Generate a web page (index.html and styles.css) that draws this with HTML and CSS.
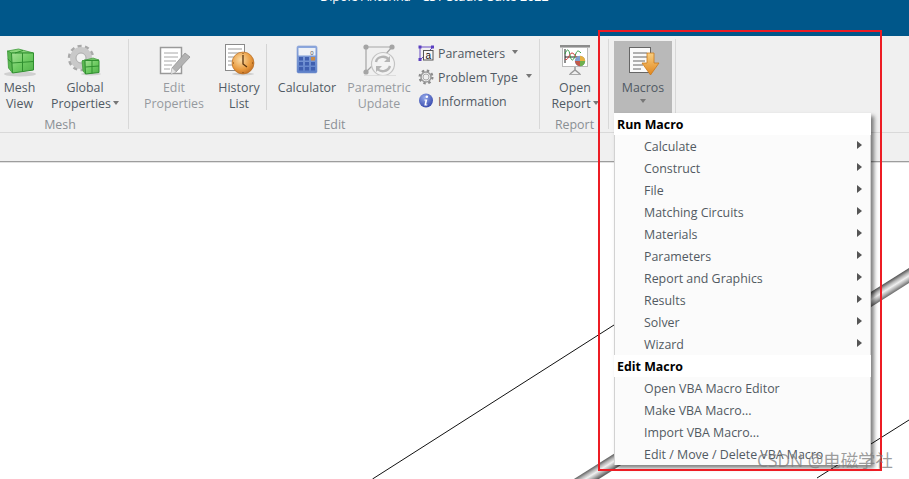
FILE: index.html
```html
<!DOCTYPE html>
<html lang="en">
<head>
<meta charset="utf-8">
<title>Dipole Antenna - CST Studio Suite 2022</title>
<link rel="stylesheet" href="styles.css">
</head>
<body>
<svg width="0" height="0" class="defs">
  <defs>
    <linearGradient id="green" x1="0" y1="0" x2="1" y2="1"><stop offset="0" stop-color="#a5e095"/><stop offset=".5" stop-color="#6ecb62"/><stop offset="1" stop-color="#4fb048"/></linearGradient>
    <radialGradient id="clock" cx=".4" cy=".35" r=".75"><stop offset="0" stop-color="#fbdca6"/><stop offset=".6" stop-color="#e99b3f"/><stop offset="1" stop-color="#b8641c"/></radialGradient>
    <linearGradient id="arrow" x1="0" y1="0" x2="0" y2="1"><stop offset="0" stop-color="#f8cf82"/><stop offset="1" stop-color="#e2861c"/></linearGradient>
    <linearGradient id="calc" x1="0" y1="0" x2="0" y2="1"><stop offset="0" stop-color="#8ea9de"/><stop offset="1" stop-color="#5c7fc8"/></linearGradient>
    <radialGradient id="info" cx=".4" cy=".3" r=".8"><stop offset="0" stop-color="#93a8ea"/><stop offset="1" stop-color="#2d3fa6"/></radialGradient>
    <linearGradient id="pipe" gradientUnits="userSpaceOnUse" x1="750" y1="368.2" x2="756.75" y2="378.95"><stop offset="0" stop-color="#5a5a5a"/><stop offset=".25" stop-color="#b4b4b4"/><stop offset=".5" stop-color="#f0f0f0"/><stop offset=".75" stop-color="#b0b0b0"/><stop offset="1" stop-color="#666"/></linearGradient>
  </defs>
</svg>

<header class="titlebar"><span class="title">Dipole Antenna - CST Studio Suite 2022</span></header>

<section class="ribbon">
  <div class="group group-mesh">
    <div class="group-body">
      <div class="btn w-mesh">
        <svg class="icon" viewBox="0 0 40 37"><ellipse cx="20" cy="33" rx="16" ry="2.5" fill="#bbb" opacity=".6"/><path d="M7.500 10 18.500 8 33.500 12H11.500Z" fill="#8bd67c" stroke="#3d9a3a" stroke-width=".8"/><path d="M7.500 10 11.500 12 12.500 32 8.500 27Z" fill="#5cb852" stroke="#3d9a3a" stroke-width=".8"/><path d="M11.500 12H33.500V29L12.500 32Z" fill="url(#green)" stroke="#2f8f2f"/><path d="M12 22 33.500 20.500M22.500 12V30.500M7.800 18 12 22M15 12 23 9.500" stroke="#2f8f2f" fill="none"/></svg>
        <span class="label">Mesh<br>View</span>
      </div>
      <div class="btn w-global">
        <svg class="icon" viewBox="0 0 40 37"><circle cx="16" cy="17" r="11" fill="none" stroke="#a9a9a9" stroke-width="4.500" stroke-dasharray="3.800 3.100"/><circle cx="16" cy="17" r="8" fill="none" stroke="#c9c9c9" stroke-width="6"/><circle cx="16" cy="17" r="5" fill="#f2f2f2" stroke="#aaa"/><ellipse cx="26" cy="33" rx="10" ry="1.500" fill="#bbb" opacity=".6"/><path d="M17 20 28 17 34 19H20Z" fill="#8bd67c" stroke="#3d9a3a" stroke-width=".7"/><path d="M17 20 20 19 20.500 33 18 30Z" fill="#5cb852" stroke="#3d9a3a" stroke-width=".7"/><path d="M20 19.500H34V31.500L20.500 33Z" fill="url(#green)" stroke="#2f8f2f"/><path d="M20.500 26 34 25M27 19.500V32.500" stroke="#2f8f2f"/></svg>
        <span class="label">Global<br>Properties<i class="caret caret-tight"></i></span>
      </div>
    </div>
    <div class="group-label group-label-mesh">Mesh</div>
  </div>

  <div class="group group-edit">
    <div class="group-body">
      <div class="btn w-editprops disabled">
        <svg class="icon" viewBox="0 0 40 37"><rect x="6.500" y="6.500" width="21" height="26" fill="#fff" stroke="#9a9a9a" stroke-width="1.500"/><path d="M10 12H24M10 16H24M10 20H22M10 24H18M10 28H16" stroke="#a8a8a8"/><path d="M31 12 36 16 22 31 17 33 18 27Z" fill="#b3b3b3" stroke="#8c8c8c" stroke-width=".7"/><path d="M18 27 22 31 17 33Z" fill="#e4e4e4"/></svg>
        <span class="label">Edit<br>Properties</span>
      </div>
      <div class="btn w-history">
        <svg class="icon" viewBox="0 0 40 37"><rect x="6.500" y="3.500" width="19" height="26" fill="#fff" stroke="#8a8a8a"/><path d="M9 8H23M9 12H23M9 16H18M9 20H15M9 24H14" stroke="#999"/><ellipse cx="24" cy="33" rx="11" ry="1.500" fill="#bbb" opacity=".6"/><circle cx="24" cy="22" r="11" fill="url(#clock)" stroke="#b0661e" stroke-width=".6"/><path d="M24 14V23L28 26" fill="none" stroke="#5a3510" stroke-width="1.300"/><path d="M24 12V13M24 31V32M14 22H15M33 22H34" stroke="#7a4713"/></svg>
        <span class="label">History<br>List</span>
      </div>
      <div class="vsep"></div>
      <div class="btn w-calc">
        <svg class="icon" viewBox="0 0 40 37"><rect x="10" y="5" width="20" height="27" rx="1.500" fill="url(#calc)" stroke="#7d97d2" stroke-width=".6"/><rect x="11.500" y="7" width="17" height="7.500" fill="#eef1f6"/><text class="calc-digit" x="26.500" y="13.500">0</text><g fill="#3f5fb0"><rect x="12" y="16" width="4" height="3.500"/><rect x="18" y="16" width="4" height="3.500"/><rect x="12" y="21" width="4" height="3.500"/><rect x="18" y="21" width="4" height="3.500"/><rect x="24" y="21" width="4" height="3.500"/><rect x="12" y="26" width="4" height="3.500"/><rect x="18" y="26" width="4" height="3.500"/><rect x="24" y="26" width="4" height="3.500"/></g><rect x="24" y="16" width="4" height="3.500" fill="#c98a45"/></svg>
        <span class="label">Calculator</span>
      </div>
      <div class="btn w-param disabled">
        <svg class="icon" viewBox="0 0 40 37"><path d="M7 6H33M7 6V31M33 6 26 14M7 31 14 24" fill="none" stroke="#a5a5a5" stroke-width="1.200"/><circle cx="7" cy="6" r="2.600" fill="#a5a5a5"/><circle cx="33" cy="6" r="2.600" fill="#a5a5a5"/><circle cx="7" cy="31" r="2.600" fill="#a5a5a5"/><circle cx="24" cy="23" r="11.500" fill="#f3f3f3" stroke="#c4c4c4" stroke-width="1.200"/><path d="M17 21C18 15 27 14 30 19M31 25C29 31 21 32 18 27" fill="none" stroke="#b5b5b5" stroke-width="2.400"/><path d="M31 15V21H25ZM17 31V25H23Z" fill="#b5b5b5"/><path d="M5 34.500H37" stroke="#ddd"/></svg>
        <span class="label">Parametric<br>Update</span>
      </div>
      <ul class="small-list">
        <li class="small-row">
          <svg class="small-icon" viewBox="0 0 16 16"><path d="M2 2H15L2 15Z" fill="none" stroke="#6a4fc4"/><rect x="5.500" y="5.500" width="9.500" height="9.500" fill="#f7f7f7" stroke="#555"/><text class="param-a" x="10.200" y="13.500">a</text><rect x="0.500" y="0.500" width="3" height="3" fill="#5a3fc0"/><rect x="13" y="0.500" width="3" height="3" fill="#5a3fc0"/><rect x="0.500" y="13" width="3" height="3" fill="#5a3fc0"/></svg>
          <span>Parameters</span><i class="caret caret-param"></i>
        </li>
        <li class="small-row">
          <svg class="small-icon" viewBox="0 0 16 16"><circle cx="8" cy="8" r="6.300" fill="none" stroke="#8a8a8a" stroke-width="2.400" stroke-dasharray="2.400 2.550"/><circle cx="8" cy="8" r="5" fill="none" stroke="#9b9b9b" stroke-width="1.500"/><circle cx="8" cy="8" r="3" fill="#efefef" stroke="#aaa"/></svg>
          <span>Problem Type</span><i class="caret caret-problem"></i>
        </li>
        <li class="small-row">
          <svg class="small-icon" viewBox="0 0 16 16"><circle cx="8" cy="7.500" r="7" fill="url(#info)"/><circle cx="8.800" cy="3.800" r="1.300" fill="#fff"/><path d="M6.500 6.500H9.300L8.200 11.500H9.500L9.200 12.500H6.300L7.400 7.500H6.300Z" fill="#fff"/></svg>
          <span>Information</span>
        </li>
      </ul>
    </div>
    <div class="group-label">Edit</div>
  </div>

  <div class="group group-report">
    <div class="group-body">
      <div class="btn w-report">
        <svg class="icon" viewBox="0 0 40 37"><rect x="5" y="4" width="30" height="2.500" fill="#8c8c8c"/><rect x="7.500" y="6.500" width="25" height="19" fill="#fff" stroke="#bbb"/><path d="M10 8V22M10 16H24" stroke="#222"/><path d="M10 13C12 7 14 8 15 14S18 21 20 15 23 9 26 12" fill="none" stroke="#3a9a4a"/><path d="M10 18C13 21 14 12 17 12S21 19 25 17" fill="none" stroke="#d03a3a"/><circle cx="25" cy="20" r="5.200" fill="#7f9fd0"/><path d="M25 20V14.800A5.200 5.200 0 0 1 30.200 20Z" fill="#e8b040"/><path d="M25 20H30.200A5.200 5.200 0 0 1 25 25.200Z" fill="#6fb04f"/><path d="M25 20V25.200A5.200 5.200 0 0 1 20 20Z" fill="#c25b4a"/><path d="M20 26V29M15 33 20 29 25 33" fill="none" stroke="#999" stroke-width="1.500"/><path d="M14 33.500H26" stroke="#aaa"/></svg>
        <span class="label">Open<br>Report<i class="caret caret-tight"></i></span>
      </div>
    </div>
    <div class="group-label">Report</div>
  </div>

  <div class="group group-macros">
    <div class="group-body">
      <div class="btn w-macros active">
        <svg class="icon" viewBox="0 0 40 37"><rect x="6.500" y="6.500" width="21" height="25" fill="#fafafa" stroke="#666"/><path d="M10 12H24M10 16H24M10 20H22M10 24H20M10 28H18" stroke="#666"/><path d="M24 12H31V22H36L27.500 34 19 22H24Z" fill="url(#arrow)" stroke="#c9781a" stroke-width=".8"/></svg>
        <span class="label">Macros</span>
        <i class="caret caret-macros"></i>
      </div>
    </div>
  </div>
</section>

<div class="subbar"></div>

<main class="viewport">
  <svg class="model" viewBox="0 163 909 316" width="909" height="316">
    <path d="M909 268V283L599 479H574Z" fill="url(#pipe)"/>
    <path d="M372.500 479 614 325M817 478 909 420" stroke="#111" stroke-width="1" fill="none"/>
  </svg>
</main>

<nav class="menu">
  <div class="menu-head">Run Macro</div>
  <ul class="menu-list">
    <li class="menu-item">Calculate<i class="arrow"></i></li>
    <li class="menu-item">Construct<i class="arrow"></i></li>
    <li class="menu-item">File<i class="arrow"></i></li>
    <li class="menu-item">Matching Circuits<i class="arrow"></i></li>
    <li class="menu-item">Materials<i class="arrow"></i></li>
    <li class="menu-item">Parameters<i class="arrow"></i></li>
    <li class="menu-item">Report and Graphics<i class="arrow"></i></li>
    <li class="menu-item">Results<i class="arrow"></i></li>
    <li class="menu-item">Solver<i class="arrow"></i></li>
    <li class="menu-item">Wizard<i class="arrow"></i></li>
  </ul>
  <div class="menu-head">Edit Macro</div>
  <ul class="menu-list">
    <li class="menu-item">Open VBA Macro Editor</li>
    <li class="menu-item">Make VBA Macro...</li>
    <li class="menu-item">Import VBA Macro...</li>
    <li class="menu-item">Edit / Move / Delete VBA Macro</li>
  </ul>
</nav>

<div class="highlight"></div>
<div class="watermark">CSDN @电磁学社</div>
</body>
</html>
```
FILE: styles.css
```css
* { box-sizing: border-box; }
html, body { margin: 0; padding: 0; }
body {
  width: 909px;
  height: 479px;
  overflow: hidden;
  position: relative;
  display: flex;
  flex-direction: column;
  background: #fff;
  font-family: "Open Sans", "Noto Sans", "Noto Sans CJK SC", sans-serif;
  font-size: 12.4px;
  color: #505a64;
}
ul { list-style: none; margin: 0; padding: 0; }
i { font-style: normal; }
.defs { position: absolute; }

.titlebar {
  height: 36px;
  flex: none;
  background: #00578a;
  overflow: hidden;
  padding-left: 320px;
}
.title {
  display: block;
  margin-top: -13px;
  line-height: 20px;
  font-size: 12.6px;
  color: #fff;
  white-space: nowrap;
}

.ribbon {
  height: 97px;
  flex: none;
  display: flex;
  background: #f0f0f0;
  border-bottom: 1px solid #d9d9d9;
}
.group {
  display: flex;
  flex-direction: column;
  padding-top: 3px;
  height: 96px;
  position: relative;
}
.group::after {
  content: "";
  position: absolute;
  right: 0;
  top: 3px;
  bottom: 3px;
  width: 1px;
  background: #d8d8d8;
}
.group-mesh { width: 129px; }
.group-edit { width: 411px; }
.group-report { width: 69px; }
.group-macros { width: 67px; }
.group-body {
  display: flex;
  height: 74px;
  padding-top: 2px;
  flex: none;
}
.group-label {
  height: 19px;
  padding-top: 4px;
  line-height: 15px;
  text-align: center;
  color: #8a8f94;
}
.group-label-mesh { padding-right: 9px; }

.btn {
  display: flex;
  flex-direction: column;
  align-items: center;
  height: 72px;
  flex: none;
  text-align: center;
}
.icon { width: 40px; height: 37px; margin-bottom: 2px; flex: none; overflow: visible; }
.label { line-height: 16px; white-space: nowrap; }
.disabled .label { color: #969a9f; }
.active { background: #b9b9b9; }

.w-mesh { width: 39px; }
.w-global { width: 78px; margin-left: 7px; }
.w-editprops { width: 78px; margin-left: 6px; }
.w-history { width: 52px; }
.w-calc { width: 80px; }
.w-param { width: 64px; }
.w-report { width: 70px; }
.w-macros { width: 58px; margin-left: 5px; }

.vsep {
  width: 1px;
  height: 66px;
  margin: 3px 0 0 1px;
  background: #d4d4d4;
  flex: none;
}

.small-list { margin-left: 7px; padding-top: 0; }
.small-row {
  display: flex;
  align-items: center;
  height: 24px;
  white-space: nowrap;
}
.small-icon { width: 16px; height: 16px; margin-right: 4px; flex: none; overflow: visible; }
.calc-digit { font-size: 6px; fill: #555; text-anchor: end; font-family: "Liberation Sans", sans-serif; }
.param-a { font-size: 10px; fill: #111; text-anchor: middle; font-family: "Liberation Sans", sans-serif; }

.caret {
  display: inline-block;
  width: 0;
  height: 0;
  border-left: 3.500px solid transparent;
  border-right: 3.500px solid transparent;
  border-top: 4px solid #777;
}
.caret-tight { margin-left: 2px; vertical-align: 3px; }
.caret-param { margin: -2px 0 0 7px; }
.caret-problem { margin: -2px 0 0 8px; }
.caret-macros { margin-top: 3px; }

.subbar {
  height: 29px;
  flex: none;
  background: #f0f0f0;
  border-bottom: 1px solid #9d9d9d;
}
.viewport {
  flex: 1;
  border-top: 1px solid #e2e2e2;
  position: relative;
  overflow: hidden;
}
.model { position: absolute; left: 0; top: 0; display: block; }

.menu {
  position: absolute;
  left: 614px;
  top: 113px;
  width: 257px;
  box-shadow: 3px 3px 4px rgba(0, 0, 0, .5);
  background: #fff;
}
.menu-head {
  height: 22px;
  line-height: 24px;
  padding-left: 3px;
  font-weight: 700;
  color: #000;
  background: #fff;
}
.menu-list {
  background: #fbfbfb;
  border-left: 1px solid #d2d2d2;
  border-right: 1px solid #d2d2d2;
}
.menu-item {
  display: flex;
  align-items: center;
  height: 22px;
  padding-left: 29px;
  padding-right: 8px;
  white-space: nowrap;
  color: #525a62;
}
.arrow {
  margin-left: auto;
  margin-top: -2px;
  width: 0;
  height: 0;
  border-left: 5px solid #555;
  border-top: 4px solid transparent;
  border-bottom: 4px solid transparent;
}

.highlight {
  position: absolute;
  left: 598px;
  top: 30px;
  width: 284px;
  height: 441px;
  border: 2px solid #ed1c24;
}
.watermark {
  position: absolute;
  left: 757px;
  top: 449px;
  font-size: 17.4px;
  line-height: 22px;
  color: rgba(125, 125, 125, .75);
  white-space: nowrap;
}
```
